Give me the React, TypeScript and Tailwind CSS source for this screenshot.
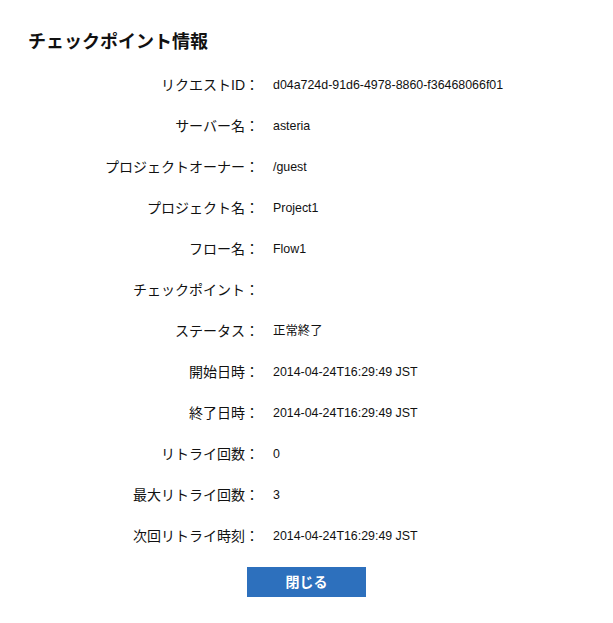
const rows: [string, string][] = [
  ["リクエストID", "d04a724d-91d6-4978-8860-f36468066f01"],
  ["サーバー名", "asteria"],
  ["プロジェクトオーナー", "/guest"],
  ["プロジェクト名", "Project1"],
  ["フロー名", "Flow1"],
  ["チェックポイント", ""],
  ["ステータス", "正常終了"],
  ["開始日時", "2014-04-24T16:29:49 JST"],
  ["終了日時", "2014-04-24T16:29:49 JST"],
  ["リトライ回数", "0"],
  ["最大リトライ回数", "3"],
  ["次回リトライ時刻", "2014-04-24T16:29:49 JST"],
];

export default function App() {
  return (
    <div
      className="min-h-screen bg-white px-7 pt-[30px] text-[#111]"
      style={{ fontFamily: '"Liberation Sans", "Noto Sans CJK JP", sans-serif' }}
    >
      <h2 className="text-[18px] leading-[24px] font-bold">チェックポイント情報</h2>

      {/* info table */}
      <div className="mt-[11px] grid grid-cols-[231px_1fr] gap-x-[14px]">
        {rows.map(([label, value]) => (
          <div key={label} className="contents">
            <div className="flex h-[41px] items-center justify-end text-[14px]">
              {label}：
            </div>
            <div className="flex h-[41px] items-center text-[12.4px]">{value}</div>
          </div>
        ))}
      </div>

      <div className="mt-[10px] flex justify-center">
        <button className="h-[30px] w-[119px] bg-[#2d70bd] text-[14px] font-bold text-white">
          閉じる
        </button>
      </div>
    </div>
  );
}
